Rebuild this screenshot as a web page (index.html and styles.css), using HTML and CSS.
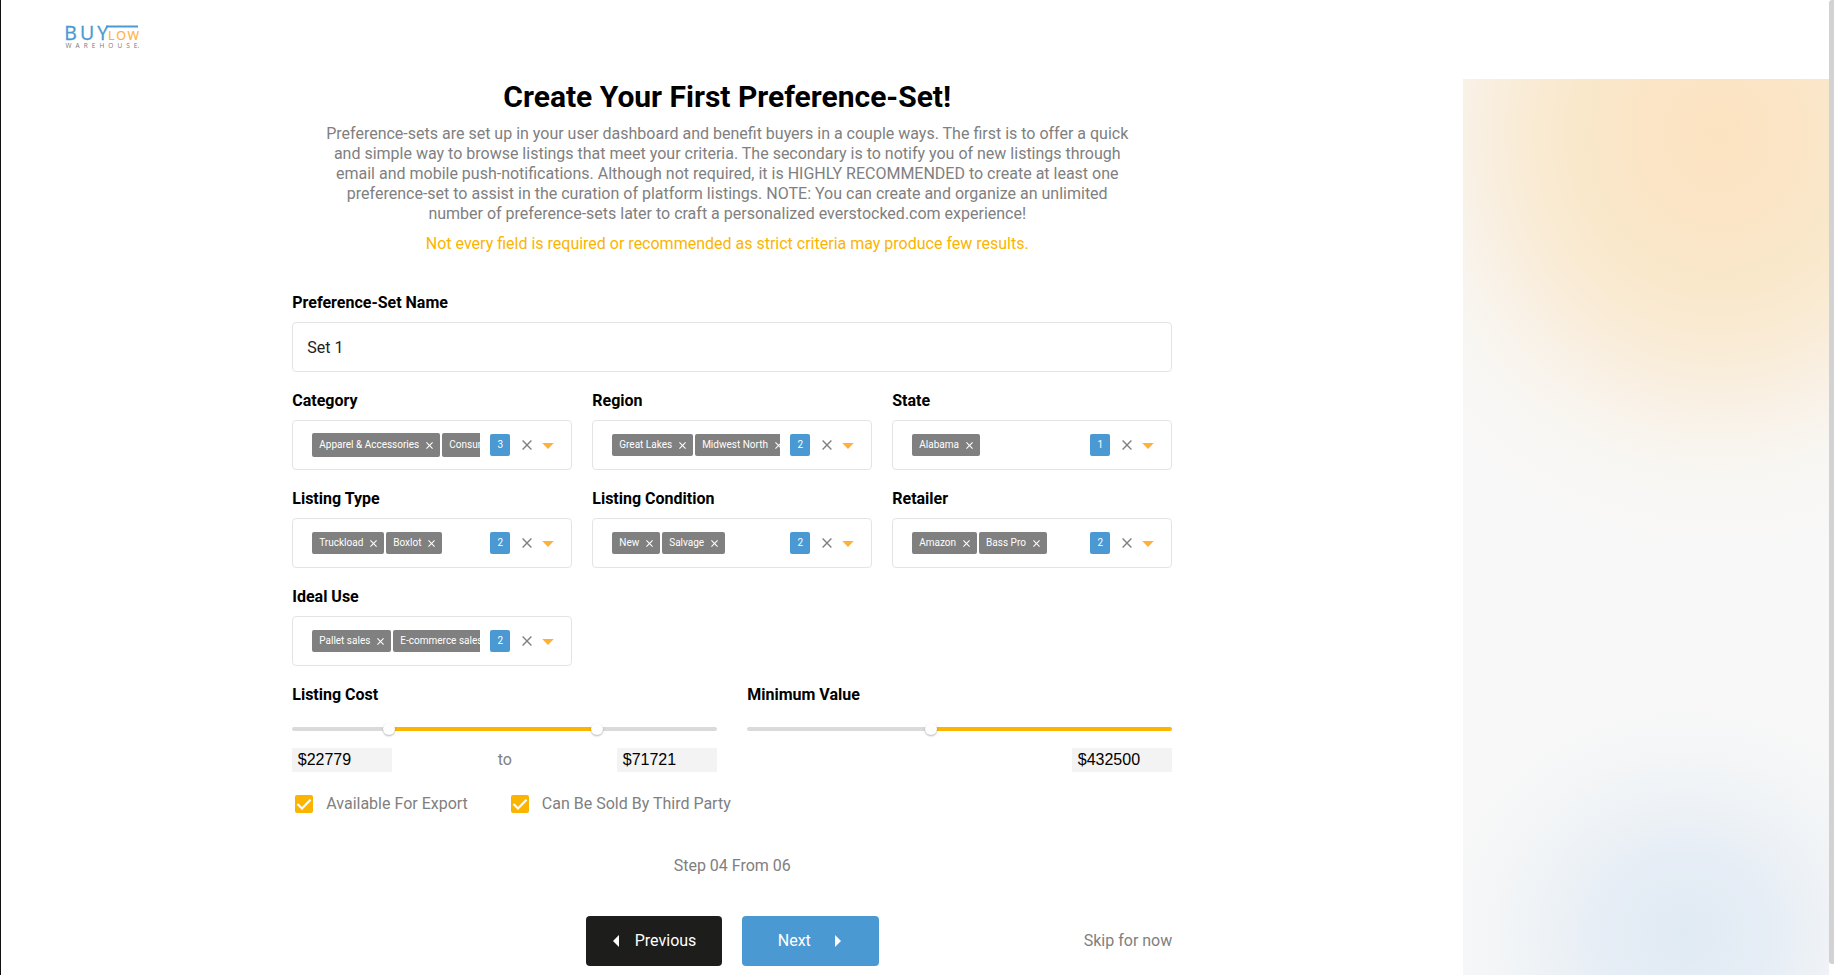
FILE: index.html
```html
<!DOCTYPE html>
<html lang="en">
<head>
<meta charset="utf-8">
<title>Create Your First Preference-Set</title>
<link rel="stylesheet" href="styles.css">
</head>
<body>
<svg class="defs" width="0" height="0" aria-hidden="true">
  <symbol id="x" viewBox="0 0 10 10"><path d="M.6.6l8.800 8.800M9.400.6L.6 9.400" fill="none" stroke="currentColor" stroke-width="var(--w)"/></symbol>
  <symbol id="caret" viewBox="0 0 12 6"><path d="M.2 0h11.600L6 6z" fill="#ffb03b"/></symbol>
  <symbol id="check" viewBox="0 0 18 18"><path d="M2.500 9L7 13.500 15.500 4.800" fill="none" stroke="#fff" stroke-width="2.200"/></symbol>
</svg>
<div class="page">
  <div class="content">
    <header class="topbar">
      <svg class="logo" width="76" height="26" viewBox="0 0 76 26">
        <text x="-.8" y="16.500" class="logo-buy" textLength="44">BUY</text>
        <path d="M41 3.500h32" stroke="#4a99d3" stroke-width="2"/>
        <text x="43" y="16.500" class="logo-low" textLength="31">LOW</text>
        <text x="0.500" y="24.800" class="logo-sub" textLength="76">WAREHOUSE<tspan dx="-4">.</tspan></text>
      </svg>
    </header>
    <main class="main">
      <div class="intro">
        <h1>Create Your First Preference-Set!</h1>
        <p class="lead">Preference-sets are set up in your user dashboard and benefit buyers in a couple ways. The first is to offer a quick<br>and simple way to browse listings that meet your criteria. The secondary is to notify you of new listings through<br>email and mobile push-notifications. Although not required, it is HIGHLY RECOMMENDED to create at least one<br>preference-set to assist in the curation of platform listings. NOTE: You can create and organize an unlimited<br>number of preference-sets later to craft a personalized everstocked.com experience!</p>
        <p class="note">Not every field is required or recommended as strict criteria may produce few results.</p>
      </div>
      <form class="form">
        <div class="field wide"><label>Preference-Set Name</label><div class="box name">Set 1</div></div>
        <div class="field"><label>Category</label><div class="box">
          <div class="tags tall"><span class="tag">Apparel &amp; Accessories<svg><use href="#x"/></svg></span><span class="tag">Consumer Electronics<svg><use href="#x"/></svg></span></div>
          <span class="count">3</span><svg class="clear"><use href="#x"/></svg><svg class="caret"><use href="#caret"/></svg></div></div>
        <div class="field"><label>Region</label><div class="box">
          <div class="tags"><span class="tag">Great Lakes<svg><use href="#x"/></svg></span><span class="tag">Midwest North<svg><use href="#x"/></svg></span></div>
          <span class="count">2</span><svg class="clear"><use href="#x"/></svg><svg class="caret"><use href="#caret"/></svg></div></div>
        <div class="field"><label>State</label><div class="box">
          <div class="tags"><span class="tag">Alabama<svg><use href="#x"/></svg></span></div>
          <span class="count">1</span><svg class="clear"><use href="#x"/></svg><svg class="caret"><use href="#caret"/></svg></div></div>
        <div class="field"><label>Listing Type</label><div class="box">
          <div class="tags"><span class="tag">Truckload<svg><use href="#x"/></svg></span><span class="tag">Boxlot<svg><use href="#x"/></svg></span></div>
          <span class="count">2</span><svg class="clear"><use href="#x"/></svg><svg class="caret"><use href="#caret"/></svg></div></div>
        <div class="field"><label>Listing Condition</label><div class="box">
          <div class="tags"><span class="tag">New<svg><use href="#x"/></svg></span><span class="tag">Salvage<svg><use href="#x"/></svg></span></div>
          <span class="count">2</span><svg class="clear"><use href="#x"/></svg><svg class="caret"><use href="#caret"/></svg></div></div>
        <div class="field"><label>Retailer</label><div class="box">
          <div class="tags"><span class="tag">Amazon<svg><use href="#x"/></svg></span><span class="tag">Bass Pro<svg><use href="#x"/></svg></span></div>
          <span class="count">2</span><svg class="clear"><use href="#x"/></svg><svg class="caret"><use href="#caret"/></svg></div></div>
        <div class="field"><label>Ideal Use</label><div class="box">
          <div class="tags"><span class="tag">Pallet sales<svg><use href="#x"/></svg></span><span class="tag">E-commerce sales<svg><use href="#x"/></svg></span></div>
          <span class="count">2</span><svg class="clear"><use href="#x"/></svg><svg class="caret"><use href="#caret"/></svg></div></div>
      </form>
      <div class="sliders">
        <div class="slider"><label>Listing Cost</label>
          <div class="track"><i style="flex:97"></i><b></b><i class="on" style="flex:208"></i><b></b><i style="flex:120"></i></div>
          <div class="amounts"><span class="amount">$22779</span><span class="to">to</span><span class="amount">$71721</span></div>
        </div>
        <div class="slider"><label>Minimum Value</label>
          <div class="track"><i style="flex:184"></i><b></b><i class="on" style="flex:241"></i></div>
          <div class="amounts end"><span class="amount">$432500</span></div>
        </div>
      </div>
      <div class="checks">
        <span class="check"><svg><use href="#check"/></svg>Available For Export</span>
        <span class="check"><svg><use href="#check"/></svg>Can Be Sold By Third Party</span>
      </div>
      <div class="step">Step 04 From 06</div>
      <div class="actions">
        <span></span>
        <div class="buttons">
          <div class="btn dark"><svg width="6" height="12"><path d="M6 0v12L0 6z" fill="#fff"/></svg>Previous</div>
          <div class="btn blue">Next<svg width="6" height="12"><path d="M0 0v12l6-6z" fill="#fff"/></svg></div>
        </div>
        <span class="skip">Skip for now</span>
      </div>
    </main>
  </div>
  <aside class="art"></aside>
  <div class="scroll"></div>
</div>
</body>
</html>
```
FILE: styles.css
```css
* { box-sizing: border-box; }
body { margin: 0; font: 16px/20px Roboto, "Liberation Sans", sans-serif; color: #808080; background: #fff; }
.defs { display: none; }
.page { display: flex; height: 975px; overflow: hidden; border-left: 1px solid #111; }
.content { width: 1462px; }
.topbar { height: 79px; padding: 23px 0 0 64px; }
.logo { display: block; overflow: visible; }
.logo-buy { font: 19.500px "Open Sans", sans-serif; fill: #4a99d3; stroke: #4a99d3; stroke-width: .3px; }
.logo-low { font: 12.500px "Open Sans", sans-serif; fill: #ffb03b; stroke: #ffb03b; stroke-width: .2px; }
.logo-sub { font: 6.500px "Open Sans", sans-serif; fill: #777; }
.main { width: 880px; margin-left: 291.250px; }
.intro { width: 870px; text-align: center; white-space: nowrap; }
h1 { margin: 0; font-size: 30px; line-height: 35px; font-weight: 700; color: #000; }
p { margin: 0; }
.lead { margin-top: 10px; }
.note { margin-top: 10px; color: #fbb400; }
.form { display: grid; grid-template-columns: repeat(3, 280px); gap: 19px 20px; margin-top: 39px; }
.wide { grid-column: 1 / -1; }
label { display: block; height: 20px; margin-bottom: 9px; font-weight: 700; color: #000; }
.box { display: flex; align-items: center; height: 50px; border: 1px solid #e4e4e4; border-radius: 4px; padding-left: 19px; }
.box.name { padding: 2px 0 0 14px; color: #222; }
.tags { display: flex; gap: 2px; width: 168px; overflow: hidden; }
.tag { display: flex; flex: none; align-items: center; height: 22px; padding: 0 7px; border-radius: 2px; background: #808080; color: #fff; font-size: 10px; }
.tall .tag { height: 24px; }
.tag svg { --w: 1.500; width: 7px; height: 7px; margin: 1px 0 0 7px; }
.count { width: 20px; height: 22px; margin-left: 10px; border-radius: 2px; background: #4a99d3; color: #fff; font-size: 10px; line-height: 21px; text-align: center; }
.clear { --w: 1.400; width: 10px; height: 10px; margin-left: 12px; color: #808080; }
.caret { width: 12px; height: 6px; margin: 1px 0 0 10px; }
.sliders { display: flex; justify-content: space-between; margin-top: 19px; }
.slider { width: 425px; }
.track { display: flex; align-items: center; height: 12px; margin-top: 18px; }
.track i { height: 4px; background: #dadada; min-width: 0; }
.track i:first-child { border-radius: 2px 0 0 2px; }
.track i:last-child { border-radius: 0 2px 2px 0; }
.track .on { background: #fbb400; }
.track b { position: relative; z-index: 1; width: 12px; height: 12px; margin: 0 -6px; border-radius: 50%; background: #fff; box-shadow: 0 1px 2px rgba(0,0,0,.3); }
.amounts { display: flex; justify-content: space-between; margin-top: 13px; line-height: 24px; }
.amounts.end { justify-content: flex-end; }
.amount { width: 100px; height: 24px; padding-left: 5.500px; background: #f3f3f3; color: #000; font: 16px/23px "Liberation Sans", sans-serif; }
.checks { display: flex; padding-left: 3px; margin-top: 22px; gap: 43px; }
.check { display: flex; align-items: center; height: 20px; }
.check svg { width: 18px; height: 18px; margin-right: 13px; border-radius: 2px; background: #fbb400; }
.step { margin-top: 42px; text-align: center; }
.actions { display: grid; grid-template-columns: 1fr 293px 1fr; align-items: center; margin-top: 40px; }
.buttons { display: flex; gap: 20px; }
.btn { display: flex; align-items: center; height: 50px; border-radius: 4px; color: #fff; }
.dark { width: 136px; padding-left: 27.500px; gap: 15.500px; background: #1d1d1b; }
.blue { width: 137px; padding-left: 36px; gap: 24.500px; background: #4a99d3; }
.skip { text-align: right; }
.art { width: 366px; height: 896px; margin-top: 79px;
  background:
    radial-gradient(ellipse 305px 285px at 221px 855px, rgba(224,234,243,1), rgba(228,236,245,.9) 28%, rgba(236,241,245,.65) 52%, rgba(245,246,247,.3) 78%, rgba(248,248,248,0)),
    radial-gradient(ellipse 385px 420px at 255px 55px, #fbe3c1 0, #fbe5c7 22%, #f9e8cb 38%, #f9ecd7 52%, #f9f1e6 66%, #f8f6f2 80%, #f8f8f8 100%); }
.scroll { width: 5px; height: 964px; border-radius: 3px 0 0 3px; background: #d2d2d2; }
```
